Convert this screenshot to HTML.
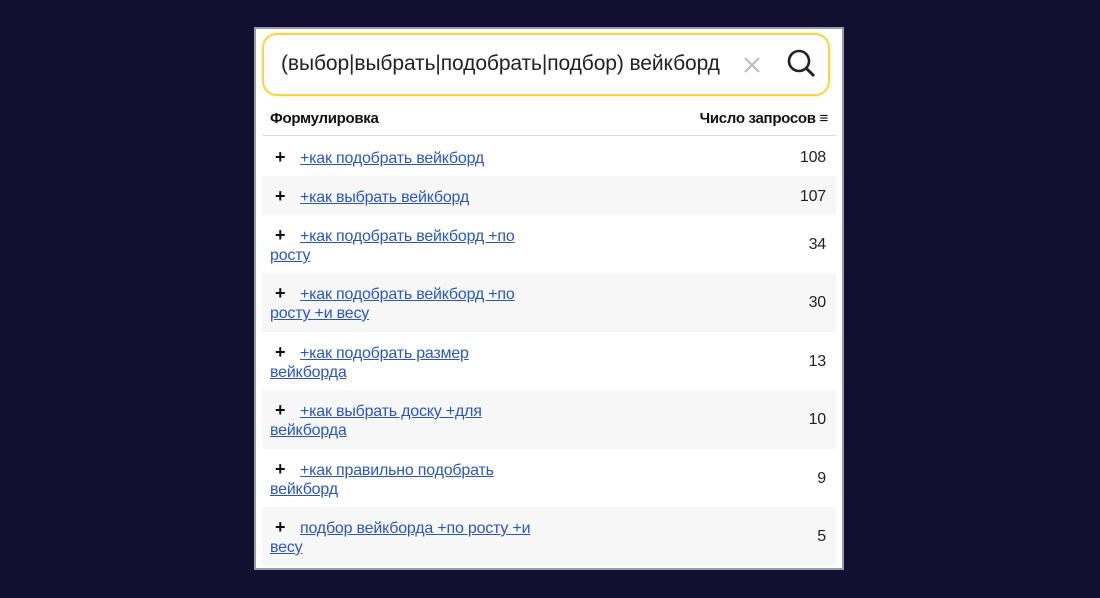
<!DOCTYPE html><html><head><meta charset="utf-8"><style>
body{margin:0;width:1100px;height:598px;background:#130f30;font-family:"Liberation Sans",sans-serif;position:relative;overflow:hidden}
.p{position:absolute;left:254px;top:27px;width:586px;height:539px;background:#fff;border:2px solid #9a99a8}
.s{position:absolute;left:6px;top:4px;width:564px;height:59px;border:2px solid #f7d54a;border-radius:15px;box-shadow:0 0 3px #f7d54a88}
.s .t{position:absolute;left:17px;top:17px;font-size:21px;color:#222;letter-spacing:-0.1px}
.h{position:absolute;left:14px;top:81px;width:568px;font-size:15px;font-weight:bold;color:#111;letter-spacing:-0.3px}
.h .r{position:absolute;right:10px;top:0}
.ln{position:absolute;left:6px;top:106px;width:574px;height:1px;background:#ddd}
.row{position:absolute;left:6px;width:574px;font-size:16px;letter-spacing:-0.2px}
.g{background:#f7f7f7}
.row .q{position:absolute;left:8px;width:400px;line-height:19px;color:#2b55c0}
.row .q b{color:#111;display:inline-block;width:30px;padding-left:5px;box-sizing:border-box;font-size:18px}
.row .q span{text-decoration:underline}
.row .n{position:absolute;right:10px;color:#222}
</style></head><body><div class="p">
<div class="s"><div class="t">(выбор|выбрать|подобрать|подбор) вейкборд</div>
<svg style="position:absolute;left:478px;top:20px" width="20" height="20"><path d="M3 3L17 17M17 3L3 17" stroke="#bbb" stroke-width="2"/></svg>
<svg style="position:absolute;left:522px;top:13px" width="32" height="32"><circle cx="13" cy="13" r="10" fill="none" stroke="#222" stroke-width="2.6"/><path d="M20.5 20.5L28 28" stroke="#222" stroke-width="3"/></svg></div>
<div class="h">Формулировка<span class="r">Число запросов <span style="font-weight:normal">≡</span></span></div>
<div class="ln"></div>
<div class="row" style="top:108px;height:39px"><div class="q" style="top:11px"><b>+</b><span>+как подобрать вейкборд</span></div><div class="n" style="top:12px">108</div></div>
<div class="row g" style="top:147px;height:39px"><div class="q" style="top:11px"><b>+</b><span>+как выбрать вейкборд</span></div><div class="n" style="top:12px">107</div></div>
<div class="row" style="top:186px;height:58px"><div class="q" style="top:11px"><b>+</b><span>+как подобрать вейкборд +по</span><br><span>росту</span></div><div class="n" style="top:21px">34</div></div>
<div class="row g" style="top:244px;height:59px"><div class="q" style="top:11px"><b>+</b><span>+как подобрать вейкборд +по</span><br><span>росту +и весу</span></div><div class="n" style="top:21px">30</div></div>
<div class="row" style="top:303px;height:58px"><div class="q" style="top:11px"><b>+</b><span>+как подобрать размер</span><br><span>вейкборда</span></div><div class="n" style="top:21px">13</div></div>
<div class="row g" style="top:361px;height:59px"><div class="q" style="top:11px"><b>+</b><span>+как выбрать доску +для</span><br><span>вейкборда</span></div><div class="n" style="top:21px">10</div></div>
<div class="row" style="top:420px;height:58px"><div class="q" style="top:11px"><b>+</b><span>+как правильно подобрать</span><br><span>вейкборд</span></div><div class="n" style="top:21px">9</div></div>
<div class="row g" style="top:478px;height:59px"><div class="q" style="top:11px"><b>+</b><span>подбор вейкборда +по росту +и</span><br><span>весу</span></div><div class="n" style="top:21px">5</div></div>
</div></body></html>
